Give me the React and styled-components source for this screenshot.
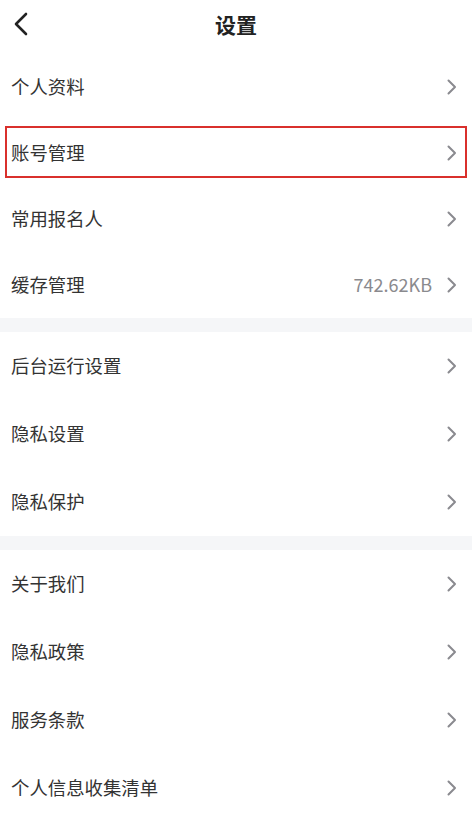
import React from "react";
import styled, { createGlobalStyle } from "styled-components";

const Global = createGlobalStyle`
  html, body { margin: 0; padding: 0; background: #fff; }
  body { font-family: "Noto Sans CJK SC", "Noto Sans", sans-serif; -webkit-font-smoothing: antialiased; }
  * { box-sizing: border-box; }
`;

const Page = styled.div`
  width: 472px;
  height: 816px;
  overflow: hidden;
  background: #fff;
  display: flex;
  flex-direction: column;
`;

const Header = styled.header`
  height: 54px;
  flex: none;
  display: grid;
  grid-template-columns: 60px 1fr 60px;
  align-items: center;
  padding-bottom: 6px;
`;

const BackButton = styled.button`
  border: none;
  background: none;
  padding: 0 0 0 13px;
  display: flex;
  align-items: center;
  height: 100%;
  cursor: pointer;
`;

const Title = styled.h1`
  margin: 0;
  text-align: center;
  font-size: 21px;
  font-weight: 700;
  color: #222;
  line-height: 1;
`;

const Section = styled.section`
  display: flex;
  flex-direction: column;
`;

const Divider = styled.div`
  height: 14px;
  flex: none;
  background: #f5f6f8;
`;

const Row = styled.div`
  position: relative;
  height: ${(p) => p.$h}px;
  flex: none;
  display: flex;
  align-items: center;
  padding: 0 14px 0 11px;
`;

const Label = styled.span`
  flex: 1;
  font-size: 18.4px;
  color: #333;
  line-height: 1;
  padding-bottom: 2px;
`;

const Value = styled.span`
  font-size: 18px;
  color: #8a8a8e;
  margin-right: 14px;
  line-height: 1;
  padding-bottom: 2px;
`;

const Highlight = styled.div`
  position: absolute;
  left: 5px;
  right: 5px;
  top: 6px;
  bottom: 8px;
  border: 2px solid #d9302c;
  pointer-events: none;
`;

const Chevron = () => (
  <svg width="12" height="16" viewBox="0 0 12 16" fill="none">
    <path d="M2.5 1.5 L9 8 L2.5 14.5" stroke="#8a8a8f" strokeWidth="2" strokeLinecap="round" strokeLinejoin="round" />
  </svg>
);

const BackIcon = () => (
  <svg width="16" height="24" viewBox="0 0 16 24" fill="none">
    <path d="M13 2 L3 12 L13 22" stroke="#222" strokeWidth="2.6" strokeLinecap="round" strokeLinejoin="round" />
  </svg>
);

const sections = [
  {
    h: 66,
    items: [
      { label: "个人资料" },
      { label: "账号管理", highlight: true },
      { label: "常用报名人" },
      { label: "缓存管理", value: "742.62KB" },
    ],
  },
  {
    h: 68,
    items: [{ label: "后台运行设置" }, { label: "隐私设置" }, { label: "隐私保护" }],
  },
  {
    h: 68,
    items: [
      { label: "关于我们" },
      { label: "隐私政策" },
      { label: "服务条款" },
      { label: "个人信息收集清单" },
    ],
  },
];

export default function App() {
  return (
    <>
      <Global />
      <Page>
        <Header>
          <BackButton aria-label="返回">
            <BackIcon />
          </BackButton>
          <Title>设置</Title>
          <span />
        </Header>
        {sections.map((s, si) => (
          <React.Fragment key={si}>
            {si > 0 && <Divider />}
            <Section>
              {s.items.map((it) => (
                <Row key={it.label} $h={s.h}>
                  <Label>{it.label}</Label>
                  {it.value && <Value>{it.value}</Value>}
                  <Chevron />
                  {it.highlight && <Highlight />}
                </Row>
              ))}
            </Section>
          </React.Fragment>
        ))}
      </Page>
    </>
  );
}
